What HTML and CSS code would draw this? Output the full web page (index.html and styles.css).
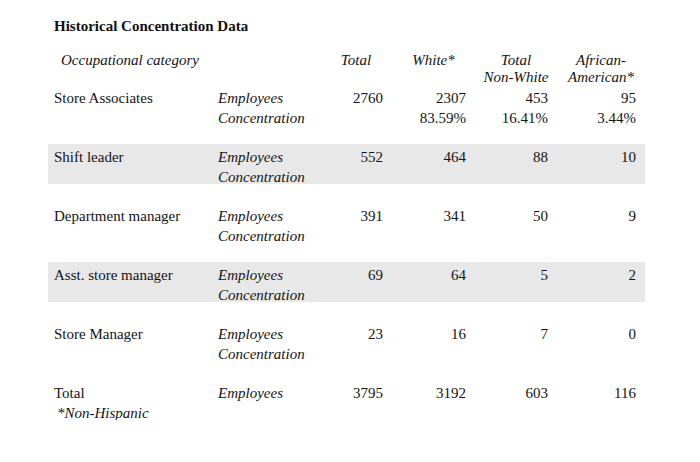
FILE: index.html
```html
<!DOCTYPE html>
<html>
<head>
<meta charset="utf-8">
<link rel="stylesheet" href="styles.css">
</head>
<body>
<div class="page">
  <h1 class="title">Historical Concentration Data</h1>
  <div class="row head">
    <div class="cell lbl occ">Occupational category</div>
    <div class="cell"></div>
    <div class="cell hc">Total</div>
    <div class="cell hc">White*</div>
    <div class="cell hc">Total<br>Non-White</div>
    <div class="cell hc">African-<br>American*</div>
  </div>
  <div class="rows">
    <div class="row">
      <div class="cell lbl">Store Associates</div>
      <div class="cell it">Employees<br>Concentration</div>
      <div class="cell num">2760</div>
      <div class="cell num">2307<br>83.59%</div>
      <div class="cell num">453<br>16.41%</div>
      <div class="cell num">95<br>3.44%</div>
    </div>
    <div class="row band">
      <div class="cell lbl">Shift leader</div>
      <div class="cell it">Employees<br>Concentration</div>
      <div class="cell num">552</div>
      <div class="cell num">464</div>
      <div class="cell num">88</div>
      <div class="cell num">10</div>
    </div>
    <div class="row">
      <div class="cell lbl">Department manager</div>
      <div class="cell it">Employees<br>Concentration</div>
      <div class="cell num">391</div>
      <div class="cell num">341</div>
      <div class="cell num">50</div>
      <div class="cell num">9</div>
    </div>
    <div class="row band">
      <div class="cell lbl">Asst. store manager</div>
      <div class="cell it">Employees<br>Concentration</div>
      <div class="cell num">69</div>
      <div class="cell num">64</div>
      <div class="cell num">5</div>
      <div class="cell num">2</div>
    </div>
    <div class="row">
      <div class="cell lbl">Store Manager</div>
      <div class="cell it">Employees<br>Concentration</div>
      <div class="cell num">23</div>
      <div class="cell num">16</div>
      <div class="cell num">7</div>
      <div class="cell num">0</div>
    </div>
    <div class="row">
      <div class="cell lbl">Total<br><span class="note">*Non-Hispanic</span></div>
      <div class="cell it">Employees</div>
      <div class="cell num">3795</div>
      <div class="cell num">3192</div>
      <div class="cell num">603</div>
      <div class="cell num">116</div>
    </div>
  </div>
</div>
</body>
</html>
```

FILE: styles.css
```css
html, body {
  margin: 0;
  padding: 0;
  background: #ffffff;
}
body {
  font-family: "Liberation Serif", "Times New Roman", serif;
  font-size: 15px;
  color: #141414;
}
.page {
  width: 597px;
  margin-left: 48px;
  padding-top: 16px;
}
.title {
  margin: 0 0 16px 6px;
  font-size: 15px;
  font-weight: bold;
  line-height: 20px;
  color: #111;
}
.row {
  display: grid;
  grid-template-columns: 164px 108px 72px 83px 82px 88px;
  height: 40px;
  box-sizing: border-box;
  padding-top: 3px;
  line-height: 20px;
}
.row.head {
  height: 33px;
  padding-top: 0;
  line-height: 17px;
  font-style: italic;
}
.rows {
  display: flex;
  flex-direction: column;
  gap: 19px;
}
.band {
  background: #e8e8e8;
}
.cell {
  white-space: nowrap;
}
.lbl {
  padding-left: 6px;
}
.occ {
  padding-left: 13px;
}
.it {
  font-style: italic;
  padding-left: 6px;
}
.hc {
  text-align: center;
}
.num {
  text-align: right;
  padding-right: 9px;
}
.note {
  font-style: italic;
  padding-left: 3px;
}
```
